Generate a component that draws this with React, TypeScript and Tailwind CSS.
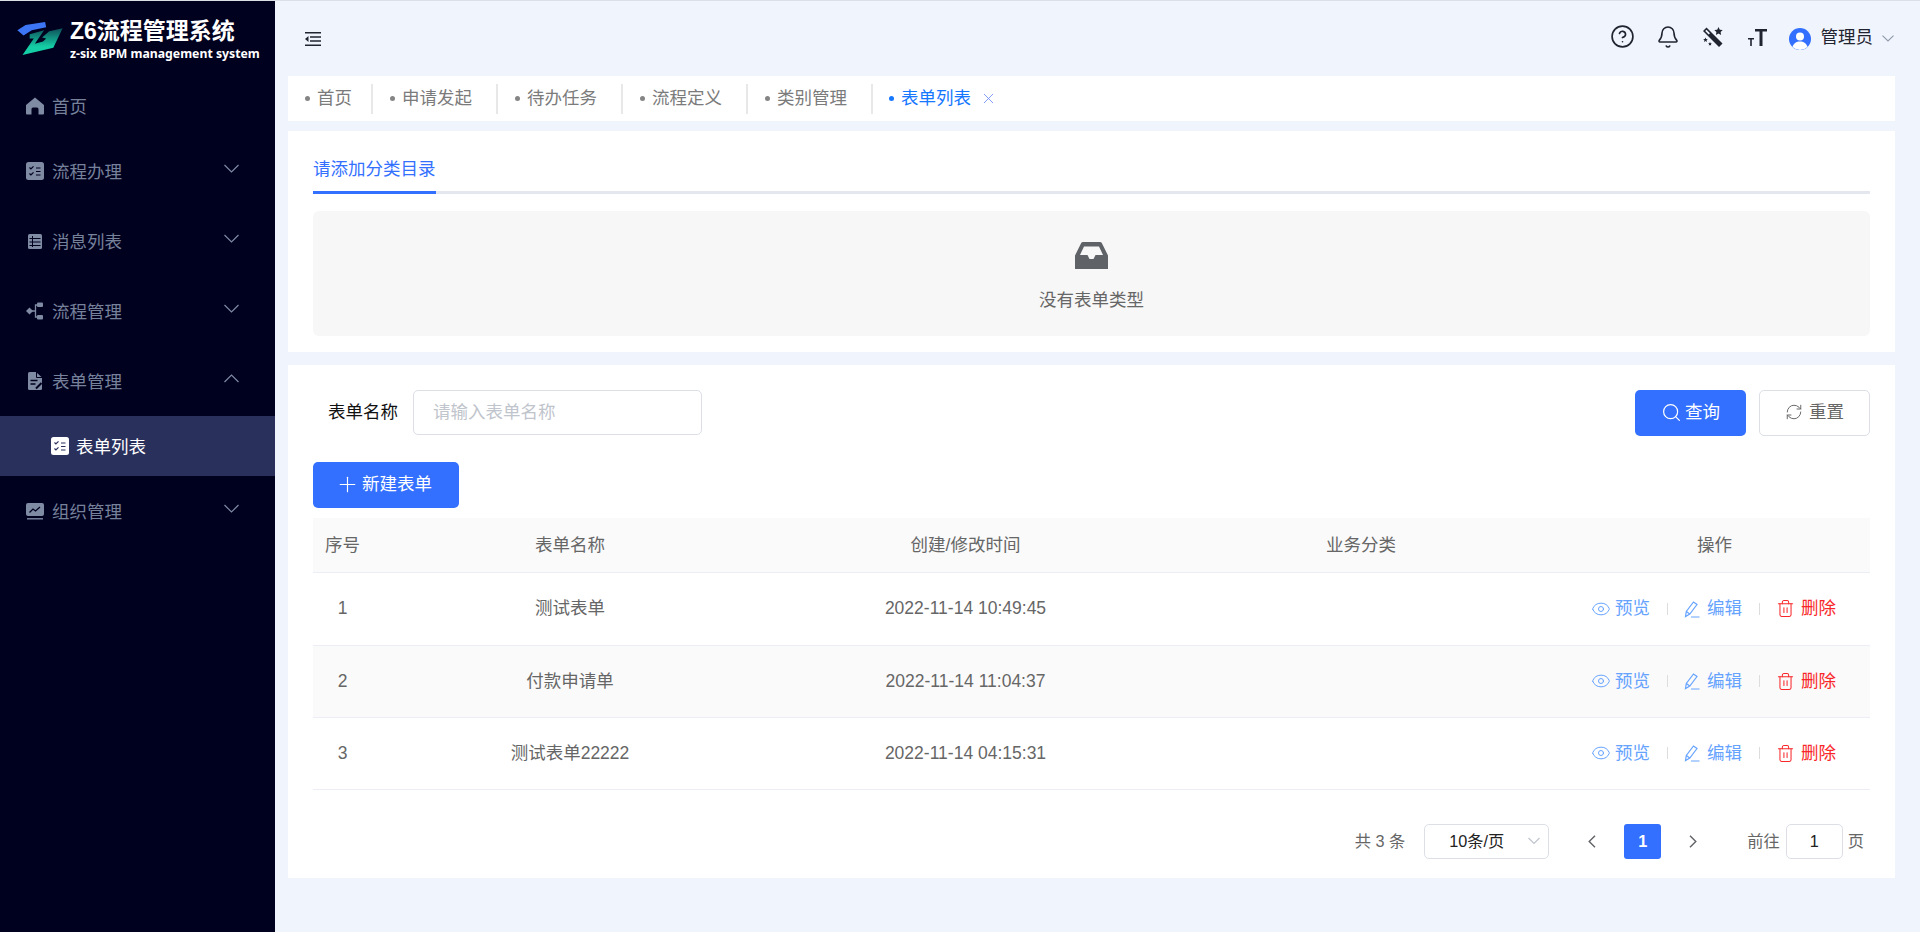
import { Bell, CircleHelp, Eye, Plus, RefreshCw, Search, Trash2, X } from "lucide-react";
import type { ReactNode } from "react";

const FormIcon = ({ fill, ink }: { fill: string; ink: string }) => (
  <svg width="18" height="18" viewBox="0 0 18 18">
    <rect width="18" height="18" rx="2.5" fill={fill} />
    <path d="M3.500 5.500l1.400 1.400L7.500 4.300M3.500 11.500l1.400 1.400 2.600-2.600" fill="none" stroke={ink} strokeWidth="1.200" />
    <path d="M10 6h4.500M10 9.500h4.500M10 13h4.500" fill="none" stroke={ink} strokeWidth="1.200" />
  </svg>
);

const HomeIcon = () => (
  <svg width="18" height="18" viewBox="0 0 18 18" fill="#7f8aa3">
    <path d="M9 .5L18 8v8.5a1 1 0 0 1-1 1h-4.500V12a1.500 1.500 0 0 0-1.500-1.500H7A1.500 1.500 0 0 0 5.500 12v5.500H1a1 1 0 0 1-1-1V8z" />
  </svg>
);

const ListIcon = () => (
  <svg width="18" height="18" viewBox="0 0 18 18">
    <rect x="2" y="2" width="14" height="15" rx="1.500" fill="#7f8aa3" />
    <path d="M3.500 6.500h11M3.500 10h11M3.500 13.500h11M6.500 4v11" stroke="#00001f" strokeWidth="1" />
  </svg>
);

const FlowIcon = () => (
  <svg width="18" height="18" viewBox="0 0 18 18" fill="#7f8aa3">
    <path d="M3.500 5.500L7 9l-3.500 3.500L0 9z" />
    <rect x="11" y="0.500" width="6" height="4.500" rx="1" />
    <rect x="11" y="13" width="6" height="4.500" rx="1" />
    <path d="M12 3H9.500v12H12M6 9h3.500" fill="none" stroke="#7f8aa3" strokeWidth="1.300" />
  </svg>
);

const DocIcon = () => (
  <svg width="18" height="18" viewBox="0 0 18 18">
    <path d="M2 1.500A1.500 1.500 0 0 1 3.500 0H10l6 5.500v11a1.500 1.500 0 0 1-1.500 1.500h-11A1.500 1.500 0 0 1 2 16.500z" fill="#7f8aa3" />
    <path d="M10.500 0v5.500H16" fill="none" stroke="#00001f" strokeWidth="1" />
    <path d="M4.500 8.500h7M4.500 12h5" stroke="#00001f" strokeWidth="1.300" />
    <path d="M10 16.500l5.500-5.500" stroke="#00001f" strokeWidth="2" />
  </svg>
);

const ChartIcon = () => (
  <svg width="18" height="18" viewBox="0 0 18 18">
    <rect y="1" width="18" height="13" rx="2" fill="#7f8aa3" />
    <path d="M3.500 10.500L7 7l2.500 2 4.500-4" fill="none" stroke="#00001f" strokeWidth="1.300" />
    <path d="M1 16.800h16" stroke="#7f8aa3" strokeWidth="1.400" />
  </svg>
);

const Chevron = ({ up }: { up?: boolean }) => (
  <svg width="15" height="9" viewBox="0 0 15 9" fill="none" stroke="#7f8aa3" strokeWidth="1.200" className="mb-[6px]">
    <path d={up ? "M.5 8L7.500 1l7 7" : "M.5 1l7 7 7-7"} />
  </svg>
);

const Logo = () => (
  <svg width="48" height="36" viewBox="5 4 46 35">
    <defs>
      <linearGradient id="zg" x1="0.400" y1="0" x2="0.400" y2="0.700">
        <stop offset="0" stopColor="#0e4f58" />
        <stop offset="1" stopColor="#14cfa6" />
      </linearGradient>
    </defs>
    <path d="M5 13l8-5 19-3 1 5-14 3-8 5z" fill="#3d76f5" />
    <path d="M17 17l14-4-9 13 8-2 3-3-4-1 7-6 13-3-9 19-30 7 11-16-4 0z" fill="url(#zg)" />
  </svg>
);

const WandIcon = () => (
  <svg width="20" height="20" viewBox="0 0 20 20" fill="#1f2430" className="mb-[3px]">
    <path d="M3.500.5L19.500 16.500 16 20 0 4zM3.500 2.700L2.200 4l3.500 3.500 1.300-1.300z" fillRule="evenodd" />
    <path d="M15.500 0l1.300 2.700 2.900.4-2.100 2 .5 2.900-2.600-1.400-2.600 1.400.5-2.900-2.100-2 2.900-.4z" />
    <path d="M2.500 10.500l.7 1.500 1.600.2-1.200 1.100.3 1.600-1.400-.8-1.400.8.3-1.600L.2 12.200l1.600-.2zM7 15l.6 1.200 1.300.2-1 .9.300 1.300L7 17.900l-1.200.7.300-1.300-1-.9 1.300-.2z" />
  </svg>
);

const FontSizeIcon = () => (
  <svg width="19" height="17" viewBox="0 0 19 17" fill="#1f2430" className="mb-[3px]">
    <path d="M7 0h12v2.500h-4.500V17h-3V2.500H7zM0 9h6v1.500H3.800V17H2.200v-6.500H0z" />
  </svg>
);

const EditIcon = () => (
  <svg width="17" height="18" viewBox="0 0 17 18" fill="none" stroke="#66a3ff" strokeWidth="1.200" className="mr-[6px]">
    <path d="M1.500 16.500l.8-5L9.500 2l3.500 2.500-7.200 9.500zM2.300 11.500l3.500 2.500M7 17h8.500" />
  </svg>
);

const Avatar = () => (
  <svg width="22" height="22" viewBox="0 0 22 22">
    <circle cx="11" cy="11" r="11" fill="#3370ff" />
    <circle cx="11" cy="8.500" r="4" fill="#fff" />
    <path d="M3.500 19c.8-3.500 3.800-5.500 7.500-5.500s6.700 2 7.500 5.500a11 11 0 0 1-15 0z" fill="#fff" />
  </svg>
);

const menu: { label: string; icon: ReactNode; arrow?: boolean }[] = [
  { label: "流程办理", icon: <FormIcon fill="#7f8aa3" ink="#00001f" />, arrow: true },
  { label: "消息列表", icon: <ListIcon />, arrow: true },
  { label: "流程管理", icon: <FlowIcon />, arrow: true },
];

const tabs = ["申请发起", "待办任务", "流程定义", "类别管理"];

const rows = [
  { no: 1, name: "测试表单", time: "2022-11-14 10:49:45" },
  { no: 2, name: "付款申请单", time: "2022-11-14 11:04:37" },
  { no: 3, name: "测试表单22222", time: "2022-11-14 04:15:31" },
];

function Sidebar() {
  return (
    <aside className="w-[275px] shrink-0 bg-[#00001f] text-[17.5px] text-[#76819a]">
      <div className="flex h-[75px] items-start pl-[17px] pt-[20px]">
        <Logo />
        <div className="ml-[5px] -mt-[3px] text-white">
          <div className="whitespace-nowrap text-[23px] font-bold leading-[27px]">Z6流程管理系统</div>
          <div className="mt-[1px] whitespace-nowrap font-['Noto_Sans',sans-serif] text-[12.250px] font-bold leading-[15px]">
            z-six BPM management system
          </div>
        </div>
      </div>
      <div className="flex h-[60px] items-center pl-[26px]">
        <HomeIcon />
        <span className="ml-[8px] pt-[2px]">首页</span>
      </div>
      {menu.map((m) => (
        <div key={m.label} className="flex h-[70px] items-center pl-[26px] pr-[36px]">
          {m.icon}
          <span className="ml-[8px] flex-1 pt-[2px]">{m.label}</span>
          <Chevron />
        </div>
      ))}
      <div className="flex h-[70px] items-center pl-[26px] pr-[36px]">
        <DocIcon />
        <span className="ml-[8px] flex-1 pt-[2px]">表单管理</span>
        <Chevron up />
      </div>
      <div className="flex h-[60px] items-center bg-[#29305c] pl-[51px] text-white">
        <FormIcon fill="#ffffff" ink="#29305c" />
        <span className="ml-[7px] pt-[2px]">表单列表</span>
      </div>
      <div className="flex h-[70px] items-center pl-[26px] pr-[36px]">
        <ChartIcon />
        <span className="ml-[8px] flex-1 pt-[2px]">组织管理</span>
        <Chevron />
      </div>
    </aside>
  );
}

function TopBar() {
  return (
    <header className="flex h-[75px] items-center justify-between pl-[17px] pr-[1px]">
      <svg width="16" height="14" viewBox="0 0 16 14" fill="#1f2430">
        <path d="M0 0h16v1.500H0zM5 4.200h11v1.500H5zM5 8.300h11v1.500H5zM0 12.500h16V14H0zM3.500 4v6L0 7z" />
      </svg>
      <div className="flex items-center text-[17.5px] text-[#1f2430]">
        <CircleHelp size={25} strokeWidth={1.600} className="mb-[5px]" />
        <Bell size={24} strokeWidth={1.600} className="mb-[3px] ml-[21px]" />
        <span className="ml-[23px]"><WandIcon /></span>
        <span className="ml-[25px]"><FontSizeIcon /></span>
        <span className="ml-[22px]"><Avatar /></span>
        <span className="mb-[2px] ml-[10px]">管理员</span>
        <span className="ml-[9px]"><svg width="12" height="7" viewBox="0 0 12 7" fill="none" stroke="#8f98a8" strokeWidth="1.100"><path d="M.5.700L6 6l5.500-5.300" /></svg></span>
      </div>
    </header>
  );
}

function Tabs() {
  return (
    <nav className="flex h-[45px] items-center bg-white text-[17.5px] text-[#7b7b7b]">
      <div className="flex h-[30px] items-center border-r-2 border-[#e8e8e8] pl-[17px] pr-[19px]">
        <i className="mr-[7px] h-[5px] w-[5px] rounded-full bg-[#858585]" />
        首页
      </div>
      {tabs.map((t) => (
        <div key={t} className="flex h-[30px] items-center border-r-2 border-[#e8e8e8] pl-[17px] pr-[24px]">
          <i className="mr-[7px] h-[5px] w-[5px] rounded-full bg-[#858585]" />
          {t}
        </div>
      ))}
      <div className="flex h-[30px] items-center pl-[16px] text-[#1677ff]">
        <i className="mr-[7px] h-[5px] w-[5px] rounded-full bg-[#1677ff]" />
        表单列表
        <X size={17} strokeWidth={1.200} className="ml-[9px] text-[#6f8df5]" />
      </div>
    </nav>
  );
}

function Category() {
  return (
    <section className="mt-[10px] bg-white px-[25px] pb-[16px] pt-[20px] text-[17.5px]">
      <div className="border-b-[3px] border-[#e4e7ed]">
        <div className="-mb-[3px] inline-block h-[43px] border-b-[3px] border-[#3370ff] pt-[4px] leading-[28px] text-[#3370ff]">
          请添加分类目录
        </div>
      </div>
      <div className="mt-[17px] flex h-[125px] flex-col items-center rounded-[6px] bg-[#f7f7f7] pt-[31px] text-[#666666]">
        <svg width="33" height="27" viewBox="0 0 33 27">
          <path
            fill="#5f6368"
            fillRule="evenodd"
            d="M8 0h17a2 2 0 0 1 1.800 1.100L33 13.500V27H0V13.500L6.200 1.100A2 2 0 0 1 8 0zm1 4.500L5 13h7.500l2 4h4l2-4H28l-4-8.500z"
          />
        </svg>
        <div className="mt-[19px] leading-[24px]">没有表单类型</div>
      </div>
    </section>
  );
}

function FilterBar() {
  return (
    <div className="flex h-[46px] items-center justify-between">
      <div className="mb-[1px] flex items-center">
        <label className="ml-[15px] text-[17.5px] text-[#111111]">表单名称</label>
        <input
          placeholder="请输入表单名称"
          className="ml-[15px] h-[45px] w-[289px] rounded-[5px] border border-[#dcdfe6] px-[19px] text-[17.5px] outline-none placeholder:text-[#c0c4cc]"
        />
      </div>
      <div className="flex items-center">
        <button className="flex h-[46px] w-[111px] items-center justify-center rounded-[5px] bg-[#3370ff] pb-[2px] text-[17.5px] text-white">
          <Search size={21} strokeWidth={1.400} className="mr-[3px]" />
          查询
        </button>
        <button className="ml-[13px] flex h-[46px] w-[111px] items-center justify-center rounded-[5px] border border-[#dcdfe6] bg-white pb-[2px] text-[17.5px] text-[#666666]">
          <RefreshCw size={18} strokeWidth={1.300} className="mr-[6px]" />
          重置
        </button>
      </div>
    </div>
  );
}

function RowActions() {
  return (
    <div className="flex items-center pl-[32px] text-[17.5px]">
      <span className="flex items-center text-[#66a3ff]">
        <Eye size={20} strokeWidth={1.200} className="mr-[4px]" />
        预览
      </span>
      <i className="ml-[17px] mr-[16px] h-[12px] w-px bg-[#dddddd]" />
      <span className="flex items-center text-[#66a3ff]">
        <EditIcon />
        编辑
      </span>
      <i className="ml-[17px] mr-[16px] h-[12px] w-px bg-[#dddddd]" />
      <span className="flex items-center text-[#f8282a]">
        <Trash2 size={19} strokeWidth={1.300} className="mr-[6px]" />
        删除
      </span>
    </div>
  );
}

function FormTable() {
  return (
    <table className="mt-[10px] w-full table-fixed border-collapse text-[17.5px] text-[#666666]">
      <colgroup>
        <col className="w-[59px]" />
        <col className="w-[396px]" />
        <col className="w-[395px]" />
        <col className="w-[396px]" />
        <col />
      </colgroup>
      <thead>
        <tr className="h-[54px] border-b border-[#ebeef5] bg-[#fafafa]">
          <th className="font-normal">序号</th>
          <th className="font-normal">表单名称</th>
          <th className="font-normal">创建/修改时间</th>
          <th className="font-normal">业务分类</th>
          <th className="font-normal">操作</th>
        </tr>
      </thead>
      <tbody>
        {rows.map((r) => (
          <tr key={r.no} className={`border-b border-[#ebeef5] ${r.no === 1 ? "h-[73px]" : "h-[72px]"} ${r.no === 2 ? "bg-[#fafafa]" : ""}`}>
            <td className="text-center">{r.no}</td>
            <td className="text-center">{r.name}</td>
            <td className="text-center">{r.time}</td>
            <td />
            <td><RowActions /></td>
          </tr>
        ))}
      </tbody>
    </table>
  );
}

function Pagination() {
  return (
    <div className="mt-[34px] flex h-[35px] items-center justify-end pr-[6px] text-[16.250px] text-[#666666]">
      <span>共 3 条</span>
      <div className="relative ml-[19px] flex h-[35px] w-[125px] items-center rounded-[5px] border border-[#dcdfe6] pl-[24px] text-[#222222]">
        10条/页
        <span className="absolute right-[8px] top-[12px]">
          <svg width="12" height="8" viewBox="0 0 12 8" fill="none" stroke="#c0c4cc" strokeWidth="1.200"><path d="M.5 1L6 6.500 11.500 1" /></svg>
        </span>
      </div>
      <span className="ml-[24px] flex w-[37px] justify-center">
        <svg width="8" height="13" viewBox="0 0 8 13" fill="none" stroke="#606266" strokeWidth="1.400"><path d="M7 .7L1.200 6.500 7 12.300" /></svg>
      </span>
      <span className="ml-[14px] flex h-[35px] w-[37px] items-center justify-center rounded-[3px] bg-[#3370ff] font-bold text-white">1</span>
      <span className="ml-[13px] flex w-[37px] justify-center">
        <svg width="8" height="13" viewBox="0 0 8 13" fill="none" stroke="#606266" strokeWidth="1.400"><path d="M1 .7l5.800 5.800L1 12.300" /></svg>
      </span>
      <span className="ml-[36px]">前往</span>
      <input
        readOnly
        value="1"
        className="ml-[6px] h-[35px] w-[57px] rounded-[5px] border border-[#dcdfe6] text-center text-[#222222] outline-none"
      />
      <span className="ml-[5px]">页</span>
    </div>
  );
}

export default function App() {
  return (
    <div className="flex h-[932px] overflow-hidden border-t border-[#dcdfe6] bg-[#f0f5fd] [font-family:'Liberation_Sans','Noto_Sans_CJK_SC',sans-serif]">
      <Sidebar />
      <main className="flex-1 pl-[13px] pr-[25px]">
        <TopBar />
        <Tabs />
        <Category />
        <section className="mt-[13px] bg-white px-[25px] pb-[19px] pt-[25px]">
          <FilterBar />
          <button className="mt-[26px] flex h-[46px] w-[146px] items-center rounded-[5px] bg-[#3370ff] pb-[2px] pl-[22px] text-[17.5px] text-white">
            <Plus size={25} strokeWidth={1.100} className="mr-[2px]" />
            新建表单
          </button>
          <FormTable />
          <Pagination />
        </section>
      </main>
    </div>
  );
}
